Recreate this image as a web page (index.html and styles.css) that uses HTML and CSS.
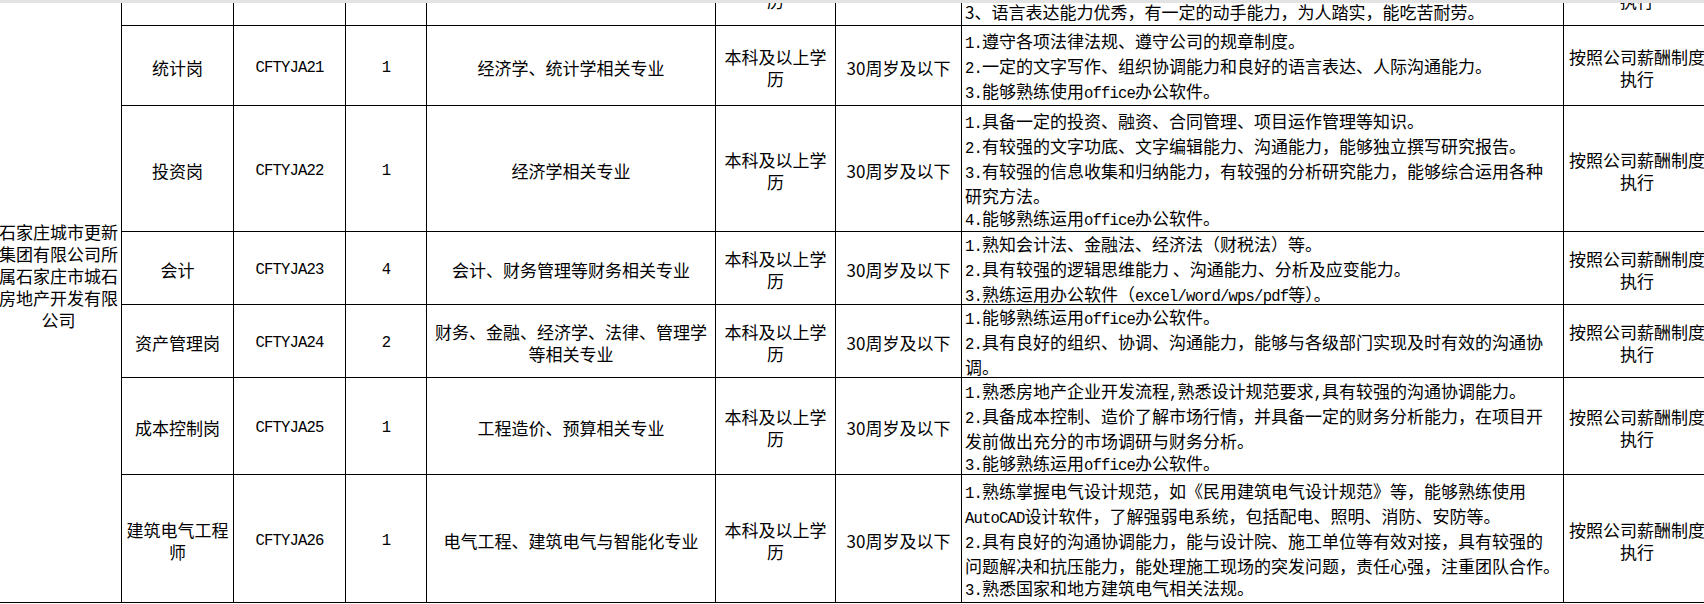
FILE: index.html
```html
<!DOCTYPE html>
<html lang="zh-CN">
<head>
<meta charset="utf-8">
<title>招聘岗位表</title>
<link rel="stylesheet" href="styles.css">
</head>
<body>
<div class="viewport">
  <div class="sheet">
    <div class="c org">石家庄城市更新集团有限公司所属石家庄市城石房地产开发有限公司</div>

    <div class="c"></div>
    <div class="c code"></div>
    <div class="c code"></div>
    <div class="c"></div>
    <div class="c">本科及以上学<br>历</div>
    <div class="c">30周岁及以下</div>
    <div class="c desc">
      <div>&nbsp;</div>
      <div>&nbsp;</div>
      <div>3、语言表达能力优秀，有一定的动手能力，为人踏实，能吃苦耐劳。</div>
    </div>
    <div class="c">按照公司薪酬制度执行</div>

    <div class="c">统计岗</div>
    <div class="c code">CFTYJA21</div>
    <div class="c code">1</div>
    <div class="c">经济学、统计学相关专业</div>
    <div class="c">本科及以上学<br>历</div>
    <div class="c">30周岁及以下</div>
    <div class="c desc">
      <div><span class="lat">1.</span>遵守各项法律法规、遵守公司的规章制度。</div>
      <div><span class="lat">2.</span>一定的文字写作、组织协调能力和良好的语言表达、人际沟通能力。</div>
      <div><span class="lat">3.</span>能够熟练使用<span class="lat">office</span>办公软件。</div>
    </div>
    <div class="c">按照公司薪酬制度执行</div>

    <div class="c">投资岗</div>
    <div class="c code">CFTYJA22</div>
    <div class="c code">1</div>
    <div class="c">经济学相关专业</div>
    <div class="c">本科及以上学<br>历</div>
    <div class="c">30周岁及以下</div>
    <div class="c desc">
      <div><span class="lat">1.</span>具备一定的投资、融资、合同管理、项目运作管理等知识。</div>
      <div><span class="lat">2.</span>有较强的文字功底、文字编辑能力、沟通能力，能够独立撰写研究报告。</div>
      <div><span class="lat">3.</span>有较强的信息收集和归纳能力，有较强的分析研究能力，能够综合运用各种</div>
      <div>研究方法。</div>
      <div><span class="lat">4.</span>能够熟练运用<span class="lat">office</span>办公软件。</div>
    </div>
    <div class="c">按照公司薪酬制度执行</div>

    <div class="c">会计</div>
    <div class="c code">CFTYJA23</div>
    <div class="c code">4</div>
    <div class="c">会计、财务管理等财务相关专业</div>
    <div class="c">本科及以上学<br>历</div>
    <div class="c">30周岁及以下</div>
    <div class="c desc">
      <div><span class="lat">1.</span>熟知会计法、金融法、经济法（财税法）等。</div>
      <div><span class="lat">2.</span>具有较强的逻辑思维能力 、沟通能力、分析及应变能力。</div>
      <div><span class="lat">3.</span>熟练运用办公软件（<span class="lat">excel/word/wps/pdf</span>等）。</div>
    </div>
    <div class="c">按照公司薪酬制度执行</div>

    <div class="c">资产管理岗</div>
    <div class="c code">CFTYJA24</div>
    <div class="c code">2</div>
    <div class="c">财务、金融、经济学、法律、管理学<br>等相关专业</div>
    <div class="c">本科及以上学<br>历</div>
    <div class="c">30周岁及以下</div>
    <div class="c desc top">
      <div><span class="lat">1.</span>能够熟练运用<span class="lat">office</span>办公软件。</div>
      <div><span class="lat">2.</span>具有良好的组织、协调、沟通能力，能够与各级部门实现及时有效的沟通协</div>
      <div>调。</div>
      <div><span class="lat">3.</span>具有良好的职业道德和保密意识，能够承受较大的工作压力。</div>
    </div>
    <div class="c">按照公司薪酬制度执行</div>

    <div class="c">成本控制岗</div>
    <div class="c code">CFTYJA25</div>
    <div class="c code">1</div>
    <div class="c">工程造价、预算相关专业</div>
    <div class="c">本科及以上学<br>历</div>
    <div class="c">30周岁及以下</div>
    <div class="c desc">
      <div><span class="lat">1.</span>熟悉房地产企业开发流程<span class="lat">,</span>熟悉设计规范要求<span class="lat">,</span>具有较强的沟通协调能力。</div>
      <div><span class="lat">2.</span>具备成本控制、造价了解市场行情，并具备一定的财务分析能力，在项目开</div>
      <div>发前做出充分的市场调研与财务分析。</div>
      <div><span class="lat">3.</span>能够熟练运用<span class="lat">office</span>办公软件。</div>
    </div>
    <div class="c">按照公司薪酬制度执行</div>

    <div class="c">建筑电气工程师</div>
    <div class="c code">CFTYJA26</div>
    <div class="c code">1</div>
    <div class="c">电气工程、建筑电气与智能化专业</div>
    <div class="c">本科及以上学<br>历</div>
    <div class="c">30周岁及以下</div>
    <div class="c desc">
      <div><span class="lat">1.</span>熟练掌握电气设计规范，如《民用建筑电气设计规范》等，能够熟练使用</div>
      <div><span class="lat">AutoCAD</span>设计软件，了解强弱电系统，包括配电、照明、消防、安防等。</div>
      <div><span class="lat">2.</span>具有良好的沟通协调能力，能与设计院、施工单位等有效对接，具有较强的</div>
      <div>问题解决和抗压能力，能处理施工现场的突发问题，责任心强，注重团队合作。</div>
      <div><span class="lat">3.</span>熟悉国家和地方建筑电气相关法规。</div>
    </div>
    <div class="c">按照公司薪酬制度执行</div>
  </div>
</div>
</body>
</html>
```

FILE: styles.css
```css
html, body {
  margin: 0;
  padding: 0;
  background: #ffffff;
}

body {
  font-family: "Noto Sans CJK SC", "Noto Sans", sans-serif;
  font-size: 17px;
  line-height: 22px;
  color: #000000;
}

.viewport {
  width: 100%;
  height: 604px;
  overflow: hidden;
  border-top: 3px solid #e3e3e3;
  box-sizing: border-box;
  background: #ffffff;
}

.sheet {
  display: grid;
  grid-template-columns: 125px 111px 111px 80px 288px 119px 125px 601px 146px;
  grid-template-rows: 75px 79px 125px 72px 72px 96px 127px;
  gap: 1px;
  padding: 1px;
  background: #000000;
  width: max-content;
  margin: -54px 0 0 -5px;
}

.c {
  background: #ffffff;
  display: flex;
  align-items: center;
  justify-content: center;
  text-align: center;
  padding: 4px 0 0 0;
  overflow: hidden;
  min-width: 0;
}

.org {
  grid-row: 1 / span 7;
  padding: 0;
}

.code,
.lat {
  font-family: "Liberation Mono", "DejaVu Sans Mono", monospace;
  font-size: 15.6px;
  letter-spacing: -0.85px;
}

.desc {
  flex-direction: column;
  align-items: stretch;
  justify-content: center;
  text-align: left;
  white-space: nowrap;
  padding: 4px 2px 0 3px;
}

.desc.top {
  justify-content: flex-start;
  padding-top: 1px;
}
```
